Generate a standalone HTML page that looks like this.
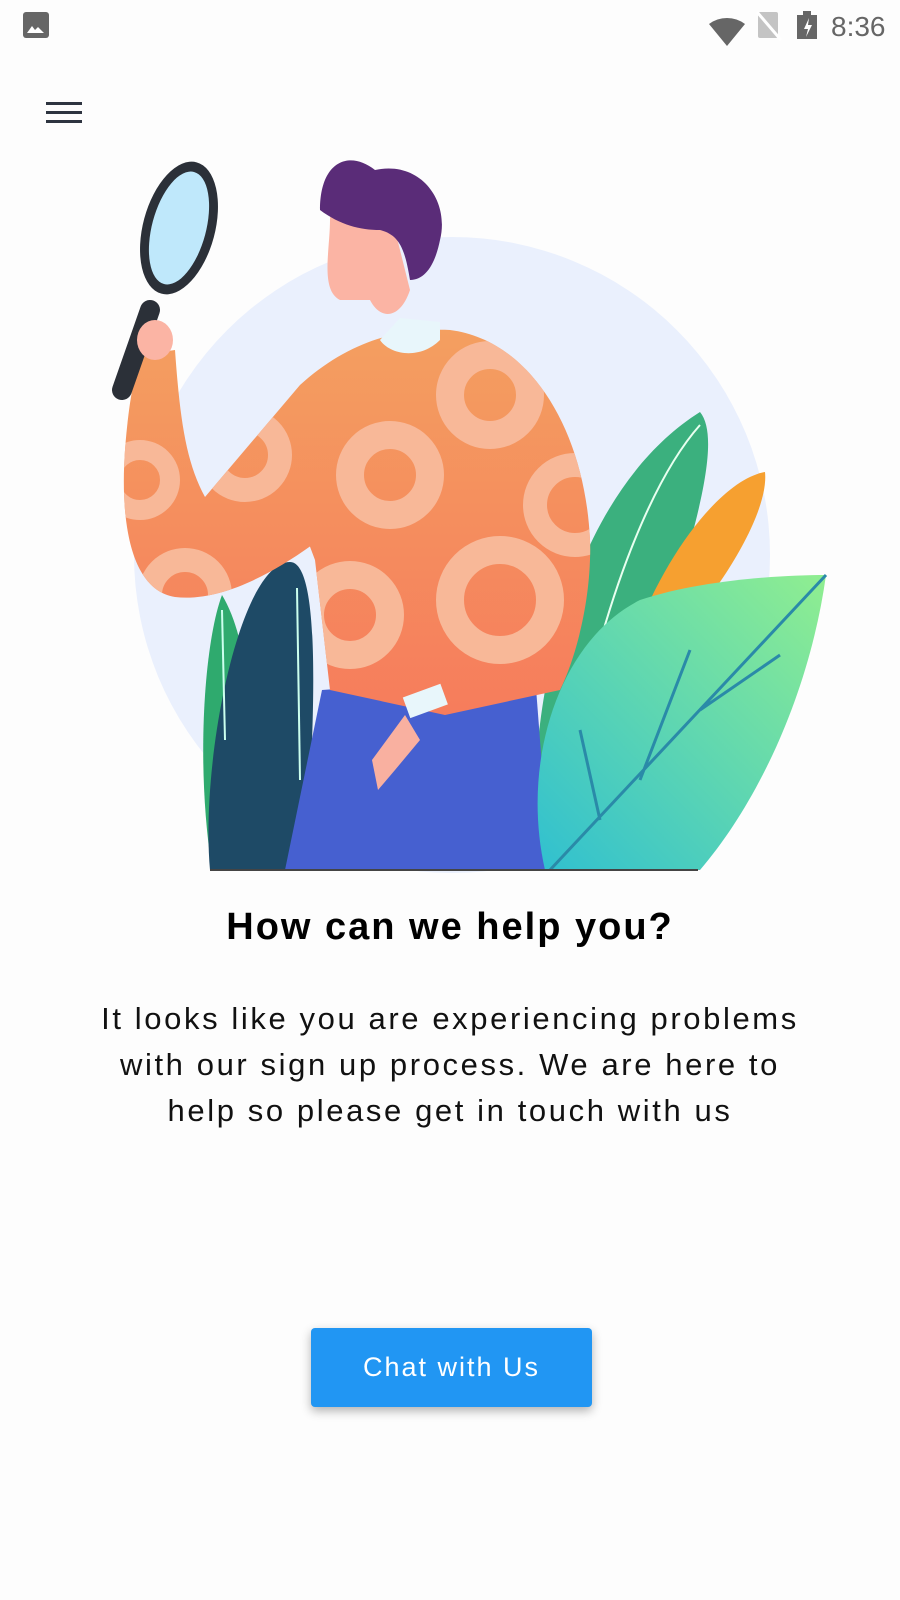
<!DOCTYPE html>
<html><head><style>
body{margin:0;width:900px;height:1600px;background:#fdfdfd;font-family:"Liberation Sans",sans-serif;position:relative;overflow:hidden}
.abs{position:absolute}
</style></head><body>
<svg class="abs" style="left:0;top:0" width="900" height="60">
<rect x="23" y="12" width="26" height="26" rx="3" fill="#666"/>
<path d="M27 33 l5-7 3 4 3-3 6 6z" fill="#fff"/>
<path d="M709 24 a30 30 0 0 1 36 0 l-18 22z" fill="#666"/>
<rect x="758" y="12" width="20" height="26" rx="2" fill="#c4c4c4"/>
<line x1="757" y1="12" x2="781" y2="40" stroke="#fff" stroke-width="3"/>
<rect x="797" y="15" width="20" height="24" fill="#666"/><rect x="803" y="11" width="8" height="4" fill="#666"/>
<path d="M809 18 l-5 11 h4 l-2 8 6-12 h-4z" fill="#fff"/>
<text x="831" y="36" font-size="28" fill="#666" font-family="Liberation Sans">8:36</text>
</svg>
<div class="abs" style="left:46px;top:102px;width:36px;height:3px;background:#2e3440;box-shadow:0 9px 0 #2e3440,0 18px 0 #2e3440"></div>
<svg class="abs" style="left:0;top:140px" width="900" height="740" viewBox="0 140 900 740">
<defs>
<linearGradient id="sh" x1="0" y1="0" x2="0" y2="1"><stop offset="0" stop-color="#f4a060"/><stop offset="1" stop-color="#f67a5c"/></linearGradient>
<linearGradient id="lf" x1="1" y1="0" x2="0" y2="1"><stop offset="0" stop-color="#90ee90"/><stop offset="1" stop-color="#30c0d0"/></linearGradient>
<clipPath id="bd"><path d="M300 385 C350 340 400 328 450 330 C530 340 585 430 590 540 C592 600 575 660 560 690 L445 715 L330 690 L315 560 L300 520z"/><path d="M140 355 L175 350 C180 420 186 462 205 497 L300 385 L312 545 C270 575 220 602 175 597 C130 590 120 520 125 450 C128 410 133 380 140 355z"/></clipPath>
</defs>
<circle cx="452" cy="555" r="318" fill="#eaf0fd"/>
<path d="M212 870 C195 760 205 640 222 595 C255 650 255 760 245 870z" fill="#2faa6e"/>
<path d="M210 870 C200 760 240 562 290 562 C325 562 312 760 305 870z" fill="#1e4a66"/>
<line x1="297" y1="588" x2="300" y2="780" stroke="#cfe" stroke-width="2"/>
<line x1="222" y1="610" x2="225" y2="740" stroke="#cfe" stroke-width="2"/>
<path d="M540 870 C520 740 560 500 700 412 C740 460 620 720 600 870z" fill="#3bb07e"/>
<path d="M590 680 C620 560 660 470 700 425" stroke="#e8fff0" stroke-width="2" fill="none"/>
<path d="M630 650 C660 560 720 480 765 472 C770 520 700 620 660 650z" fill="#f6a030"/>
<path d="M285 870 L322 690 L535 675 L550 870z" fill="#4660d0"/>
<path d="M545 870 C520 760 560 640 640 600 C700 580 780 575 826 575 C810 690 760 800 700 870z" fill="url(#lf)"/>
<path d="M550 870 L826 575 M600 820 L580 730 M640 780 L690 650 M700 710 L780 655" stroke="#2a8aa8" stroke-width="3" fill="none"/>
<g clip-path="url(#bd)">
<rect x="100" y="320" width="520" height="420" fill="url(#sh)"/>
<circle cx="390" cy="475" r="40" fill="none" stroke="#f8b898" stroke-width="28"/>
<circle cx="350" cy="615" r="40" fill="none" stroke="#f8b898" stroke-width="28"/>
<circle cx="490" cy="395" r="40" fill="none" stroke="#f8b898" stroke-width="28"/>
<circle cx="575" cy="505" r="40" fill="none" stroke="#f8b898" stroke-width="24"/>
<circle cx="245" cy="455" r="35" fill="none" stroke="#f8b898" stroke-width="24"/>
<circle cx="185" cy="595" r="35" fill="none" stroke="#f8b898" stroke-width="24"/>
<circle cx="140" cy="480" r="30" fill="none" stroke="#f8b898" stroke-width="20"/>
<circle cx="500" cy="600" r="50" fill="none" stroke="#f8b898" stroke-width="28"/>
</g>
<rect x="405" y="690" width="40" height="22" transform="rotate(-20 425 700)" fill="#e8f6fb"/>
<path d="M405 715 L372 760 L378 790 L395 770 L420 740z" fill="#f9b0a0"/>
<path d="M380 340 L400 318 L440 322 L440 340 C420 360 390 355 380 340z" fill="#e8f6fb"/>
<path d="M330 220 C330 200 360 200 390 210 L410 290 C400 320 380 320 370 300 L340 300 C320 290 330 250 330 220z" fill="#fbb4a4"/>
<path d="M320 210 C320 160 350 150 375 170 C420 160 450 200 440 240 C435 265 425 280 410 280 C405 250 400 235 380 230 C360 230 340 225 320 210z" fill="#5a2c78"/>
<ellipse cx="179" cy="228" rx="36" ry="68" transform="rotate(15 179 228)" fill="#2b3038"/>
<ellipse cx="179" cy="228" rx="27" ry="58" transform="rotate(15 179 228)" fill="#bfe8fb"/>
<path d="M150 310 L122 390" stroke="#2b3038" stroke-width="20" stroke-linecap="round"/>
<ellipse cx="155" cy="340" rx="18" ry="20" fill="#fbb4a4"/>
<line x1="210" y1="870" x2="698" y2="870" stroke="#444" stroke-width="2"/>
</svg>
<div class="abs" style="left:0;width:900px;top:906px;text-align:center;font-size:38px;font-weight:bold;letter-spacing:2px;color:#000">How can we help you?</div>
<div class="abs" style="left:80px;width:740px;top:996px;text-align:center;font-size:31px;line-height:46px;letter-spacing:2.6px;color:#111">It looks like you are experiencing problems with our sign up process. We are here to help so please get in touch with us</div>
<div class="abs" style="left:311px;top:1328px;width:281px;height:79px;background:#2196f3;border-radius:4px;box-shadow:0 4px 10px rgba(0,0,0,.3);color:#fff;font-size:27px;line-height:79px;text-align:center;letter-spacing:2px">Chat with Us</div>
</body></html>
